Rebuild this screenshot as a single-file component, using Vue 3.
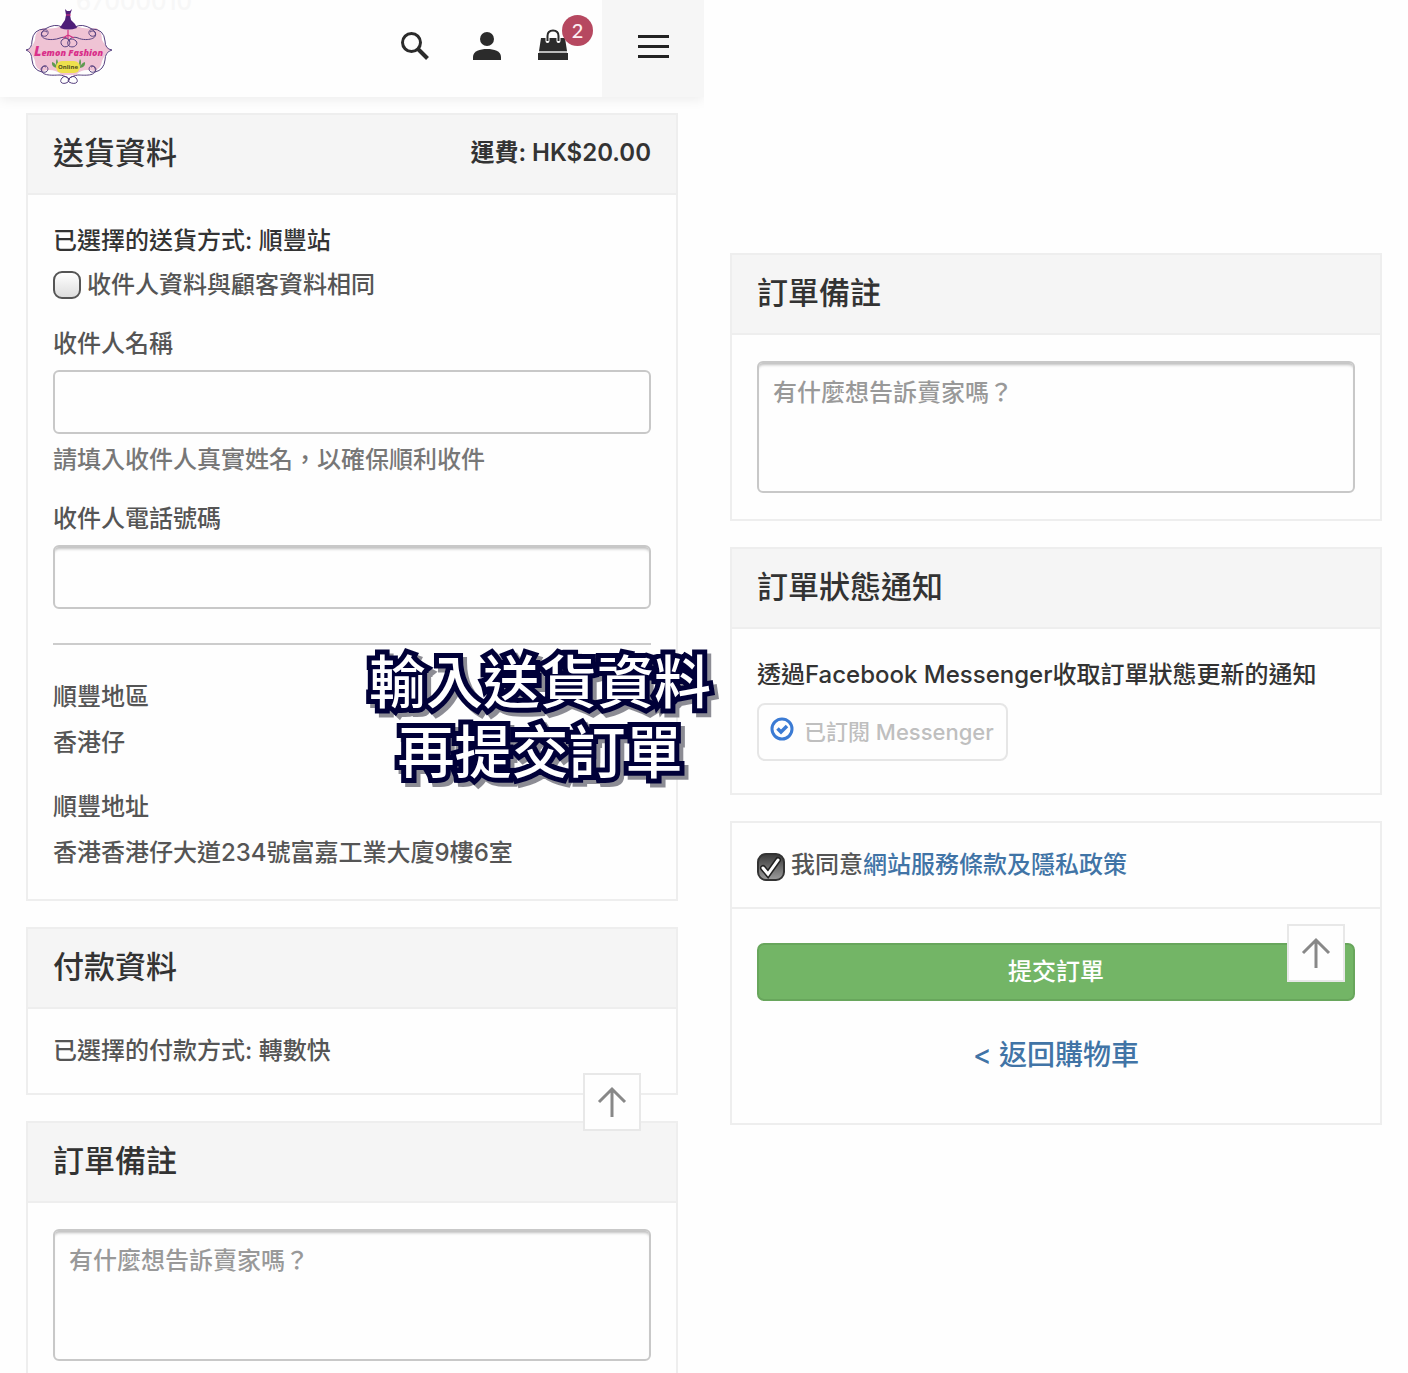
<template>
  <div class="page">
    <section class="column column--left">
      <header class="topbar">
        <span class="topbar__ghost" aria-hidden="true">67000010</span>
        <a class="topbar__logo" href="#" aria-label="Lemon Fashion Online">
          <svg width="86" height="78" viewBox="0 0 86 78">
            <path
              d="M17 20 Q30 22 36 17 H49 Q57 22 70 20 Q76 23 76 32 Q80 39 84 42 Q79 46 76 53 Q75 61 68 63 Q56 60 50 67 H36 Q28 60 17 63 Q9 61 9 53 Q7 46 1 42 Q7 39 9 32 Q9 23 17 20Z"
              fill="#efc3d4"
            />
            <g fill="none" stroke="#56407f" stroke-width="1">
              <path d="M0 42 Q6 41 6 33 Q7 21 19 21 Q29 15 36 19 M86 42 Q79 41 79 33 Q78 21 66 21 Q56 15 49 19" />
              <path d="M0 42 Q6 44 6 52 Q7 62 16 64 M86 42 Q79 44 79 52 Q78 62 69 64" />
              <path d="M21 24 C15 20 13 30 20 28 C25 25 20 18 16 24 C12 32 27 33 34 30 C41 27 47 34 42 38 C37 41 33 35 36 32 C39 29 43 31 43 33" />
              <path d="M64 24 C70 20 72 30 65 28 C60 25 65 18 69 24 C73 32 58 33 52 30 C45 27 39 34 43 38 C48 41 53 36 50 33 C47 30 43 31 43 33" />
              <path d="M20 59 C14 56 13 66 20 64 C25 61 19 54 16 60 C13 69 29 67 34 67 C40 68 45 71 42 74 C38 77 32 75 36 70 C38 67 43 69 43 72" />
              <path d="M65 59 C71 56 72 66 65 64 C60 61 66 54 69 60 C72 69 57 67 52 67 C46 68 40 71 43 74 C48 77 54 75 50 70 C48 67 43 69 43 72" />
            </g>
            <path d="M39 1 L40 7 L39 12 Q36 16 34 20 Q42 23 51 20 Q49 15 45 12 L44 7 L46 1 L44 3 H41Z" fill="#4e1d78" />
            <path d="M40 7 H45 M42 22 V28 M37 30 L42 27 L48 30 M42 27 V31" fill="none" stroke="#d63384" stroke-width="1.2" />
            <text class="logo-name" x="8" y="48">
              <tspan class="logo-name__initial">L</tspan>emon Fashion
            </text>
            <path d="M31 60 Q25 59 26 54 Q30 55 31 60 Q29 53 31 51 Q33 55 31 60 M54 60 Q60 59 59 54 Q55 55 54 60 Q56 53 54 51 Q52 55 54 60" fill="#5f9a52" />
            <rect x="30" y="53" width="24" height="12" rx="6" fill="#eee04d" />
            <text class="logo-tag" x="42" y="61" text-anchor="middle">Online</text>
          </svg>
        </a>
        <nav class="topbar__nav">
          <button class="icon-button" type="button" aria-label="搜尋">
            <svg width="30" height="30" viewBox="0 0 30 30" fill="none" stroke="#2b2b2b">
              <circle cx="11.5" cy="11.5" r="9" stroke-width="3" />
              <path d="M18 18 L27.500 27.500" stroke-width="4" />
            </svg>
          </button>
          <button class="icon-button" type="button" aria-label="會員">
            <svg width="30" height="30" viewBox="0 0 30 30" fill="#2b2b2b">
              <circle cx="15" cy="8" r="7" />
              <path d="M1 29 V26 C1 20 8 18 15 18 C22 18 29 20 29 26 V29Z" />
            </svg>
          </button>
          <button class="icon-button icon-button--cart" type="button" aria-label="購物車">
            <svg width="32" height="32" viewBox="0 0 32 32">
              <path d="M4 9 H28 L30 22 H2Z M1 24 H31 V31 H1Z" fill="#2b2b2b" />
              <path d="M2 22 H30 V24 H2Z" fill="#bbb" />
              <path d="M10.500 12 V7 Q10.500 1.500 16 1.500 Q21.500 1.500 21.500 7 V12" fill="none" stroke="#fff" stroke-width="4" stroke-linecap="round" />
              <path d="M10.500 12 V7 Q10.500 1.500 16 1.500 Q21.500 1.500 21.500 7 V12" fill="none" stroke="#2b2b2b" stroke-width="2" />
            </svg>
            <span class="badge">2</span>
          </button>
        </nav>
        <button class="topbar__menu" type="button" aria-label="選單">
          <svg width="32" height="30" viewBox="0 0 32 30" fill="#222">
            <path d="M1 1 H32 V4 H1Z M1 11 H32 V14 H1Z M1 21 H32 V24 H1Z" />
          </svg>
        </button>
      </header>

      <div class="stack">
        <section class="panel">
          <div class="panel__header">
            <h2>送貨資料</h2>
            <strong class="panel__fee">運費: HK$20.00</strong>
          </div>
          <div class="panel__body panel__body--delivery">
            <p class="text-dark">已選擇的送貨方式: 順豐站</p>
            <label class="check">
              <span class="check__box">
                <input v-model="sameAsCustomer" type="checkbox" />
                <svg v-if="sameAsCustomer" viewBox="0 0 28 28"><path d="M6 15 L11 21 L21 7" /></svg>
              </span>
              <span>收件人資料與顧客資料相同</span>
            </label>
            <div class="field">
              <label for="recipient-name">收件人名稱</label>
              <input id="recipient-name" v-model="recipient.name" class="control control--flat" type="text" />
              <p class="field__help">請填入收件人真實姓名，以確保順利收件</p>
            </div>
            <div class="field">
              <label for="recipient-phone">收件人電話號碼</label>
              <input id="recipient-phone" v-model="recipient.phone" class="control" type="tel" />
            </div>
            <hr class="divider" />
            <dl class="address">
              <div v-for="row in address" :key="row.label">
                <dt>{{ row.label }}</dt>
                <dd>{{ row.value }}</dd>
              </div>
            </dl>
          </div>
        </section>

        <section class="panel">
          <div class="panel__header">
            <h2>付款資料</h2>
          </div>
          <div class="panel__body">
            <p>已選擇的付款方式: 轉數快</p>
          </div>
        </section>

        <section class="panel">
          <div class="panel__header">
            <h2><label for="remark-left">訂單備註</label></h2>
          </div>
          <div class="panel__body">
            <textarea id="remark-left" v-model="remark" class="control control--area" placeholder="有什麼想告訴賣家嗎？"></textarea>
          </div>
        </section>
      </div>

      <button class="to-top to-top--left" type="button" aria-label="回到頂部">
        <svg width="30" height="32" viewBox="0 0 30 32">
          <path d="M15 31 V3 M2 16 L15 3 L28 16" />
        </svg>
      </button>
    </section>

    <section class="column column--right">
      <div class="stack">
        <section class="panel">
          <div class="panel__header">
            <h2><label for="remark-right">訂單備註</label></h2>
          </div>
          <div class="panel__body">
            <textarea id="remark-right" v-model="remark" class="control control--area" placeholder="有什麼想告訴賣家嗎？"></textarea>
          </div>
        </section>

        <section class="panel">
          <div class="panel__header">
            <h2>訂單狀態通知</h2>
          </div>
          <div class="panel__body panel__body--notify">
            <p class="text-dark">透過Facebook Messenger收取訂單狀態更新的通知</p>
            <button class="messenger" type="button">
              <svg width="24" height="24" viewBox="0 0 24 24" fill="none" stroke="#3b7bd4">
                <circle cx="12" cy="12" r="10" stroke-width="3" />
                <path d="M7.500 11.500 L11 15 L17 9" stroke-width="3.500" />
              </svg>
              <span>已訂閱 Messenger</span>
            </button>
          </div>
        </section>

        <section class="panel panel--submit">
          <div class="agree">
            <span class="check__box">
              <input id="agree" v-model="agreed" type="checkbox" />
              <svg v-if="agreed" viewBox="0 0 28 28">
                <path class="check__edge" d="M6 15 L11 21 L21 7" />
                <path d="M6 15 L11 21 L21 7" />
              </svg>
            </span>
            <p><label for="agree">我同意</label><a href="#">網站服務條款及隱私政策</a></p>
          </div>
          <div class="actions">
            <button class="submit" type="button">提交訂單</button>
            <a class="back" href="#">&lt; 返回購物車</a>
          </div>
          <button class="to-top to-top--right" type="button" aria-label="回到頂部">
            <svg width="30" height="32" viewBox="0 0 30 32">
              <path d="M15 31 V3 M2 16 L15 3 L28 16" />
            </svg>
          </button>
        </section>
      </div>
    </section>

    <p class="caption">輸入送貨資料<br />再提交訂單</p>
  </div>
</template>

<script setup>
import { reactive, ref } from 'vue'

const sameAsCustomer = ref(false)
const agreed = ref(true)
const remark = ref('')
const recipient = reactive({ name: '', phone: '' })

const address = [
  { label: '順豐地區', value: '香港仔' },
  { label: '順豐地址', value: '香港香港仔大道234號富嘉工業大廈9樓6室' }
]
</script>

<style>
body {
  margin: 0;
  background: #fefefe;
}
</style>

<style scoped>
.page {
  position: relative;
  display: grid;
  grid-template-columns: 1fr 1fr;
  height: 100vh;
  overflow: hidden;
  background: #fefefe;
  color: #555;
  font-family: Inter, "Noto Sans CJK TC", sans-serif;
  font-size: 24px;
  font-weight: 500;
  line-height: 32px;
}

.page * {
  box-sizing: border-box;
}

p,
h2,
dl,
dd {
  margin: 0;
}

button,
input,
textarea {
  font: inherit;
}

button {
  cursor: pointer;
}

a {
  color: #4174a6;
  text-decoration: none;
}

.column {
  position: relative;
  min-width: 0;
}

.column--right {
  padding-top: 253px;
  background: #fefefe;
}

.stack {
  display: flex;
  flex-direction: column;
  gap: 26px;
  padding: 0 26px;
}

/* top bar */
.topbar {
  position: relative;
  display: flex;
  align-items: center;
  height: 97px;
  margin-bottom: 16px;
  padding-left: 26px;
  background: #fefefe;
  box-shadow: 0 2px 12px rgba(0, 0, 0, 0.08);
}

.topbar__ghost {
  position: absolute;
  top: -14px;
  left: 76px;
  color: #f7f7f7;
}

.topbar__logo {
  position: relative;
  display: flex;
  margin-bottom: 4px;
}

.logo-name {
  font: italic 800 9px "Open Sans", sans-serif;
  fill: #d9308a;
}

.logo-name__initial {
  font-size: 14px;
}

.logo-tag {
  font: bold 6px "Open Sans", sans-serif;
  fill: #4b4a1c;
}

.topbar__nav {
  display: flex;
  gap: 42px;
  margin-bottom: 5px;
  margin-left: auto;
  margin-right: 33px;
}

.icon-button {
  position: relative;
  display: flex;
  padding: 0;
  border: none;
  background: none;
}

.icon-button--cart {
  align-items: flex-start;
  margin-top: -2px;
  margin-left: -7px;
}

.badge {
  position: absolute;
  top: -14px;
  left: 25px;
  width: 31px;
  height: 31px;
  border-radius: 50%;
  background: #b64860;
  color: #fdeff2;
  font-family: Lato, sans-serif;
  font-size: 20px;
  line-height: 31px;
  text-align: center;
}

.topbar__menu {
  display: flex;
  align-items: center;
  justify-content: center;
  width: 102px;
  height: 100%;
  padding: 0;
  border: none;
  background: #f6f6f6;
}

/* panels */
.panel {
  position: relative;
  border: 2px solid #eee;
  background: #fefefe;
}

.panel__header {
  display: flex;
  align-items: center;
  justify-content: space-between;
  height: 80px;
  padding: 0 25px 2px;
  border-bottom: 2px solid #eee;
  background: #f5f5f5;
  color: #333;
}

.panel__header h2 {
  font-size: 31px;
  font-weight: 500;
}

.panel__fee {
  font-weight: 600;
}

.panel__body {
  display: flex;
  flex-direction: column;
  padding: 26px 25px;
}

.panel__body--delivery {
  padding-top: 30px;
  padding-bottom: 30px;
}

.panel__body--notify {
  align-items: flex-start;
  gap: 12px;
  padding-top: 30px;
  padding-bottom: 32px;
}

.text-dark {
  color: #333;
}

/* form controls */
.check {
  display: flex;
  align-items: center;
  gap: 6px;
  margin: 12px 0 27px;
}

.check__box {
  position: relative;
  display: block;
  flex: none;
  width: 28px;
  height: 28px;
}

.check__box input {
  display: block;
  width: 28px;
  height: 28px;
  margin: 0;
  border: 2px solid #555;
  border-radius: 9px;
  background: linear-gradient(#fff, #ddd);
  appearance: none;
}

.check__box input:checked {
  border-color: #333;
  background: linear-gradient(#3d3d3d, #999);
}

.check__box svg {
  position: absolute;
  inset: 0;
  fill: none;
  stroke: #fff;
  stroke-width: 3;
  stroke-linecap: round;
  pointer-events: none;
}

.check__edge {
  stroke: #222;
  stroke-width: 6;
}

.field {
  display: flex;
  flex-direction: column;
  gap: 10px;
}

.field + .field {
  margin-top: 27px;
}

.field__help {
  color: #777;
}

.control {
  display: block;
  width: 100%;
  height: 64px;
  padding: 14px;
  border: 2px solid #c8c8c8;
  border-radius: 6px;
  outline: none;
  background: #fefefe;
  box-shadow: inset 0 4px 3px -2px rgba(0, 0, 0, 0.25);
  color: #555;
}

.control--flat {
  box-shadow: none;
}

.control--area {
  height: 132px;
  resize: none;
}

.control::placeholder {
  color: #999;
  opacity: 1;
}

.divider {
  width: 100%;
  height: 2px;
  margin: 34px 0 36px;
  border: none;
  background: #ccc;
}

.address {
  display: flex;
  flex-direction: column;
  gap: 32px;
}

.address dd {
  margin-top: 14px;
}

.messenger {
  display: flex;
  align-items: center;
  gap: 10px;
  height: 58px;
  padding: 0 12px 0 11px;
  border: 2px solid #e6e6e6;
  border-radius: 8px;
  background: #fefefe;
  color: #bfbfbf;
  font-size: 22px;
}

.messenger svg {
  margin-bottom: 6px;
}

/* submit */
.agree {
  display: flex;
  align-items: flex-end;
  gap: 6px;
  padding: 26px 25px;
  border-bottom: 2px solid #eee;
}

.actions {
  display: flex;
  flex-direction: column;
  align-items: center;
  gap: 36px;
  padding: 34px 25px 50px;
}

.submit {
  width: 100%;
  height: 58px;
  padding: 0;
  border: 2px solid #68a65c;
  border-radius: 7px;
  background: #73b566;
  color: #fff;
}

.back {
  font-size: 28px;
  line-height: 36px;
}

.to-top {
  position: absolute;
  right: 63px;
  display: flex;
  align-items: center;
  justify-content: center;
  width: 58px;
  height: 58px;
  padding: 0;
  border: 2px solid #e8e8e8;
  background: #fefefe;
}

.to-top path {
  fill: none;
  stroke: #888;
  stroke-width: 3;
}

.to-top--left {
  top: 1073px;
}

.to-top--right {
  top: 101px;
  right: 35px;
}

.caption {
  position: absolute;
  top: 643px;
  left: 369px;
  color: #fff;
  font-family: "Noto Sans CJK TC", sans-serif;
  font-size: 57px;
  font-weight: 500;
  line-height: 70px;
  text-align: center;
  filter: drop-shadow(4px 4px 0 #8c8c94);
  paint-order: stroke fill;
  stroke-linejoin: round;
  -webkit-text-stroke: 10px #000038;
}
</style>
